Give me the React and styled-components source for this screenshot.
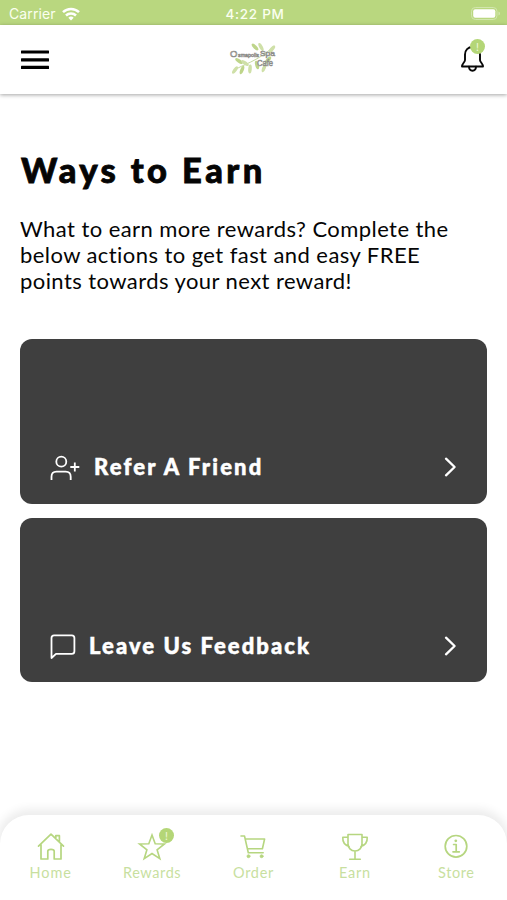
import React from 'react';
import styled, { createGlobalStyle } from 'styled-components';

const GlobalStyle = createGlobalStyle`
  * {
    box-sizing: border-box;
  }
  body {
    margin: 0;
    background: #fff;
    font-family: Lato, "Liberation Sans", sans-serif;
    color: #050505;
  }
  svg {
    display: block;
    overflow: visible;
  }
`
const Screen = styled.div`
  display: flex;
  flex-direction: column;
  height: 900px;
  overflow: hidden;
`
const StatusBar = styled.div`
  display: grid;
  grid-template-columns: 1fr auto 1fr;
  align-items: center;
  flex: none;
  height: 25px;
  padding: 2px 6px 0 9px;
  background: #b9d77f;
  color: #fbfff0;
  font-family: Inter, sans-serif;
  font-size: 14px;
`
const Carrier = styled.div`
  display: flex;
  align-items: center;
  gap: 6px;
  letter-spacing: 0.1px;
`
const Time = styled.div`
  font-size: 13.5px;
  font-weight: 500;
  letter-spacing: 0.7px;
`
const Battery = styled.div`
  display: flex;
  justify-content: flex-end;
`
const Header = styled.header`
  display: grid;
  grid-template-columns: 1fr auto 1fr;
  align-items: center;
  flex: none;
  height: 69px;
  padding: 0 22px 0 21px;
  box-shadow: 0 1px 4px rgba(0, 0, 0, 0.36);
`
const PlainButton = styled.button`
  padding: 0;
  border: 0;
  background: none;
  font: inherit;
  color: inherit;
  cursor: pointer;
`
const BellButton = styled(PlainButton)`
  position: relative;
  justify-self: end;
  margin-bottom: 3px;
`
const Badge = styled.span`
  position: absolute;
  top: ${props => props.$top}px;
  right: ${props => props.$right}px;
  width: 15px;
  height: 15px;
  border-radius: 50%;
  background: #b4d677;
  color: #eff8dc;
  font-size: 11px;
  line-height: 15px;
  text-align: center;
`
const Content = styled.main`
  flex: 1;
  padding: 55px 20px 0;
`
const Title = styled.h1`
  margin: 0 0 0 1px;
  font-size: 34.5px;
  font-weight: 900;
  line-height: 42px;
  letter-spacing: 3.4px;
  -webkit-text-stroke: 0.8px currentColor;
`
const Intro = styled.p`
  margin: 25px 0 45px;
  font-size: 22px;
  line-height: 26px;
  letter-spacing: 0.43px;
  white-space: nowrap;
`
const Cards = styled.div`
  display: grid;
  gap: 14px;
`
const Card = styled(PlainButton)`
  display: flex;
  align-items: flex-end;
  height: 164.5px;
  padding: 0 30px 21.4px;
  border-radius: 12px;
  background: #3f3f3f;
  color: #fff;
`
const CardLabel = styled.span`
  flex: 1;
  margin-left: ${props => props.$gap}px;
  text-align: left;
  font-size: 22px;
  font-weight: 900;
  line-height: 30px;
  letter-spacing: ${props => props.$spacing}px;
  -webkit-text-stroke: 0.5px currentColor;
`
const CardIcon = styled.span`
  display: flex;
  align-items: center;
  height: 28px;
`
const TabBar = styled.nav`
  display: grid;
  grid-template-columns: repeat(5, 1fr);
  flex: none;
  height: 85px;
  padding-top: 18px;
  border-radius: 29px 29px 0 0;
  background: #fff;
  box-shadow: 0 -3px 10px 3px rgba(0, 0, 0, 0.075);
`
const Tab = styled.a`
  display: flex;
  flex-direction: column;
  align-items: center;
  gap: 3px;
  color: #b6d680;
`
const TabIcon = styled.span`
  position: relative;
`
const TabLabel = styled.span`
  font-size: 14.5px;
  line-height: 18px;
  letter-spacing: ${props => props.$spacing}px;
  color: #c8df9f;
`

const stroke = { fill: 'none', stroke: 'currentColor', strokeLinecap: 'round', strokeLinejoin: 'round' };

const WifiIcon = () => (
  <svg width="18" height="14" viewBox="0 0 18 14" fill="none" stroke="#fff" strokeWidth="2.5">
    <path d="M1 5.2a11.5 11.5 0 0 1 16 0" />
    <path d="M4 8.5a7.2 7.2 0 0 1 10 0" />
    <path d="M6.3 10.8a4 4 0 0 1 5.4 0L9 13.6z" fill="#fff" stroke="none" />
  </svg>
);

const BatteryIcon = () => (
  <svg width="30" height="13" viewBox="0 0 30 13">
    <rect x="0.5" y="0.5" width="25.5" height="12" rx="3.8" fill="none" stroke="#d2e6ae" />
    <rect x="2.2" y="2.2" width="22.1" height="8.6" rx="2" fill="#fff" />
    <path d="M27.5 4.5c2 .8 2 3.2 0 4z" fill="#d2e6ae" />
  </svg>
);

const MenuIcon = () => (
  <svg width="28" height="20" viewBox="0 0 28 20" fill="#000">
    <rect y=".4" width="28" height="3.2" rx=".5" />
    <rect y="8.2" width="28" height="3.2" rx=".5" />
    <rect y="15.8" width="28" height="3.2" rx=".5" />
  </svg>
);

// x, y, angle
const leaves = [
  [5, 28, 125], [12, 28, 110], [20, 27, 95], [9, 19, 35], [15, 21, 35],
  [27, 23, 75], [34, 26, 110], [25, 5, 45], [31, 5, 62], [38, 18, 130], [42, 7, -50],
];

const Logo = () => (
  <svg width="46" height="36" viewBox="0 0 46 36">
    <path d="M3 29C13 22 27 20 43 5" fill="none" stroke="#c6d99f" strokeWidth="1" />
    {leaves.map(([x, y, angle], index) => (
      <ellipse key={index} cx={x} cy={y} rx="4.4" ry="1.8" fill={index % 2 ? '#bed58a' : '#cfe0a8'}
        transform={`rotate(${angle} ${x} ${y})`} />
    ))}
    <g fill="#d8d8d4" stroke="#8c8c88" strokeWidth="0.6" fontFamily="Liberation Sans, sans-serif">
      <text x="0" y="14.5" fontSize="9.5">O</text>
      <text x="8" y="15" fontSize="6" textLength="21" lengthAdjust="spacingAndGlyphs">smapolis</text>
      <text x="30" y="14.3" fontSize="8" textLength="15" lengthAdjust="spacingAndGlyphs">Spa</text>
      <text x="27" y="23.8" fontSize="8.5" textLength="16" lengthAdjust="spacingAndGlyphs">Cafe</text>
    </g>
  </svg>
);

const BellIcon = () => (
  <svg width="25" height="28" viewBox="0 0 25 28" {...stroke} stroke="#080808" strokeWidth="1.9">
    <path d="M12.5 3C8 3 5 6.3 5 10.5V16c0 2.2-3 3.6-3 6.5h21c0-2.9-3-4.3-3-6.5v-5.5C20 6.3 17 3 12.5 3z" />
    <path d="M9 22.8c.2 5.2 6.8 5.2 7 0" />
  </svg>
);

const UserPlusIcon = () => (
  <svg width="30" height="26" viewBox="0 0 30 26" {...stroke} strokeWidth="1.8" strokeLinecap="butt">
    <circle cx="11.3" cy="6.7" r="5" />
    <path d="M1.5 25v-3.2c0-3.2 2-5.1 5-5.1h9.2c3 0 5 1.9 5 5.1V25" />
    <path d="M20.3 12h9M24.8 7.5v9" />
  </svg>
);

const ChatIcon = () => (
  <svg width="26" height="26" viewBox="0 0 26 26" {...stroke} strokeWidth="1.8">
    <path d="M1.5 24V4c0-1.7 1-2.6 2.6-2.6h17.7c1.7 0 2.6.9 2.6 2.6v13.2c0 1.7-.9 2.6-2.6 2.6H6z" />
  </svg>
);

const ChevronIcon = () => (
  <svg width="13" height="22" viewBox="0 0 13 22" {...stroke} strokeWidth="2.3">
    <path d="M2 1.7l8.6 8.3L2 18.3" />
  </svg>
);

const HomeIcon = () => (
  <svg width="28" height="28" viewBox="0 0 28 28" {...stroke} strokeWidth="1.7">
    <path d="M1.5 13.2L14 1.2l12.5 12M4 11.6V26h6.8v-7.8c0-2.4 6.4-2.4 6.4 0V26H24V11.6M18.8 5V2.7h3.6v6" />
  </svg>
);

const StarIcon = () => (
  <svg width="28" height="28" viewBox="0 0 28 28" {...stroke} strokeWidth="1.6" strokeLinejoin="miter">
    <path d="M14 2l3.2 8.7 9.3.3-7.4 5.8 2.7 8.9-7.8-5.2-7.8 5.2 2.7-8.9L1.5 11l9.3-.3z" />
  </svg>
);

const CartIcon = () => (
  <svg width="28" height="28" viewBox="0 0 28 28" {...stroke} strokeWidth="1.6">
    <path d="M2 3h3.5l3.8 16.8h14.9M6.3 6h19.3l-2.2 9.7H8.5" />
    <circle cx="9.5" cy="23.2" r="1.5" fill="currentColor" strokeWidth=".8" />
    <circle cx="22.6" cy="23.2" r="1.5" fill="currentColor" strokeWidth=".8" />
  </svg>
);

const TrophyIcon = () => (
  <svg width="28" height="28" viewBox="0 0 28 28" {...stroke} strokeWidth="1.6">
    <path d="M7 1.5h14v9.2c0 4-2.8 7.3-7 7.3s-7-3.3-7-7.3zM14 18v8.2M8.7 26.2h10.6M6.8 4.2h-5c-.3 4.2 1.3 7.6 6.3 9.2M21.2 4.2h5c.3 4.2-1.3 7.6-6.3 9.2" />
  </svg>
);

const InfoIcon = () => (
  <svg width="28" height="28" viewBox="0 0 28 28" {...stroke} strokeWidth="1.7">
    <circle cx="14" cy="13.3" r="10.8" />
    <circle cx="13.8" cy="7.8" r="1.4" fill="currentColor" stroke="none" />
    <path d="M11.6 11.5h2.6v7.3M11 18.8h6.3" />
  </svg>
);

const cards = [
  { label: 'Refer A Friend', icon: <UserPlusIcon />, gap: 14, spacing: 2.15 },
  { label: 'Leave Us Feedback', icon: <ChatIcon />, gap: 13, spacing: 2.05 },
];

const tabs = [
  { label: 'Home', icon: <HomeIcon />, spacing: 0.9 },
  { label: 'Rewards', icon: <StarIcon />, spacing: 0.6, badge: true },
  { label: 'Order', icon: <CartIcon />, spacing: 0.7 },
  { label: 'Earn', icon: <TrophyIcon />, spacing: 0.7 },
  { label: 'Store', icon: <InfoIcon />, spacing: 0.6 },
];

export default function App() {
  return (
    <Screen>
      <GlobalStyle />
      <StatusBar>
        <Carrier>Carrier <WifiIcon /></Carrier>
        <Time>4:22 PM</Time>
        <Battery><BatteryIcon /></Battery>
      </StatusBar>
      <Header>
        <PlainButton aria-label="Menu"><MenuIcon /></PlainButton>
        <Logo />
        <BellButton aria-label="Notifications">
          <BellIcon />
          <Badge $top={-5} $right={0}>!</Badge>
        </BellButton>
      </Header>
      <Content>
        <Title>Ways to Earn</Title>
        <Intro>
          What to earn more rewards? Complete the<br />
          below actions to get fast and easy FREE<br />
          points towards your next reward!
        </Intro>
        <Cards>
          {cards.map((card) => (
            <Card key={card.label}>
              <CardIcon>{card.icon}</CardIcon>
              <CardLabel $gap={card.gap} $spacing={card.spacing}>{card.label}</CardLabel>
              <CardIcon><ChevronIcon /></CardIcon>
            </Card>
          ))}
        </Cards>
      </Content>
      <TabBar>
        {tabs.map((tab) => (
          <Tab key={tab.label}>
            <TabIcon>
              {tab.icon}
              {tab.badge && <Badge $top={-5} $right={-8}>!</Badge>}
            </TabIcon>
            <TabLabel $spacing={tab.spacing}>{tab.label}</TabLabel>
          </Tab>
        ))}
      </TabBar>
    </Screen>
  );
}
